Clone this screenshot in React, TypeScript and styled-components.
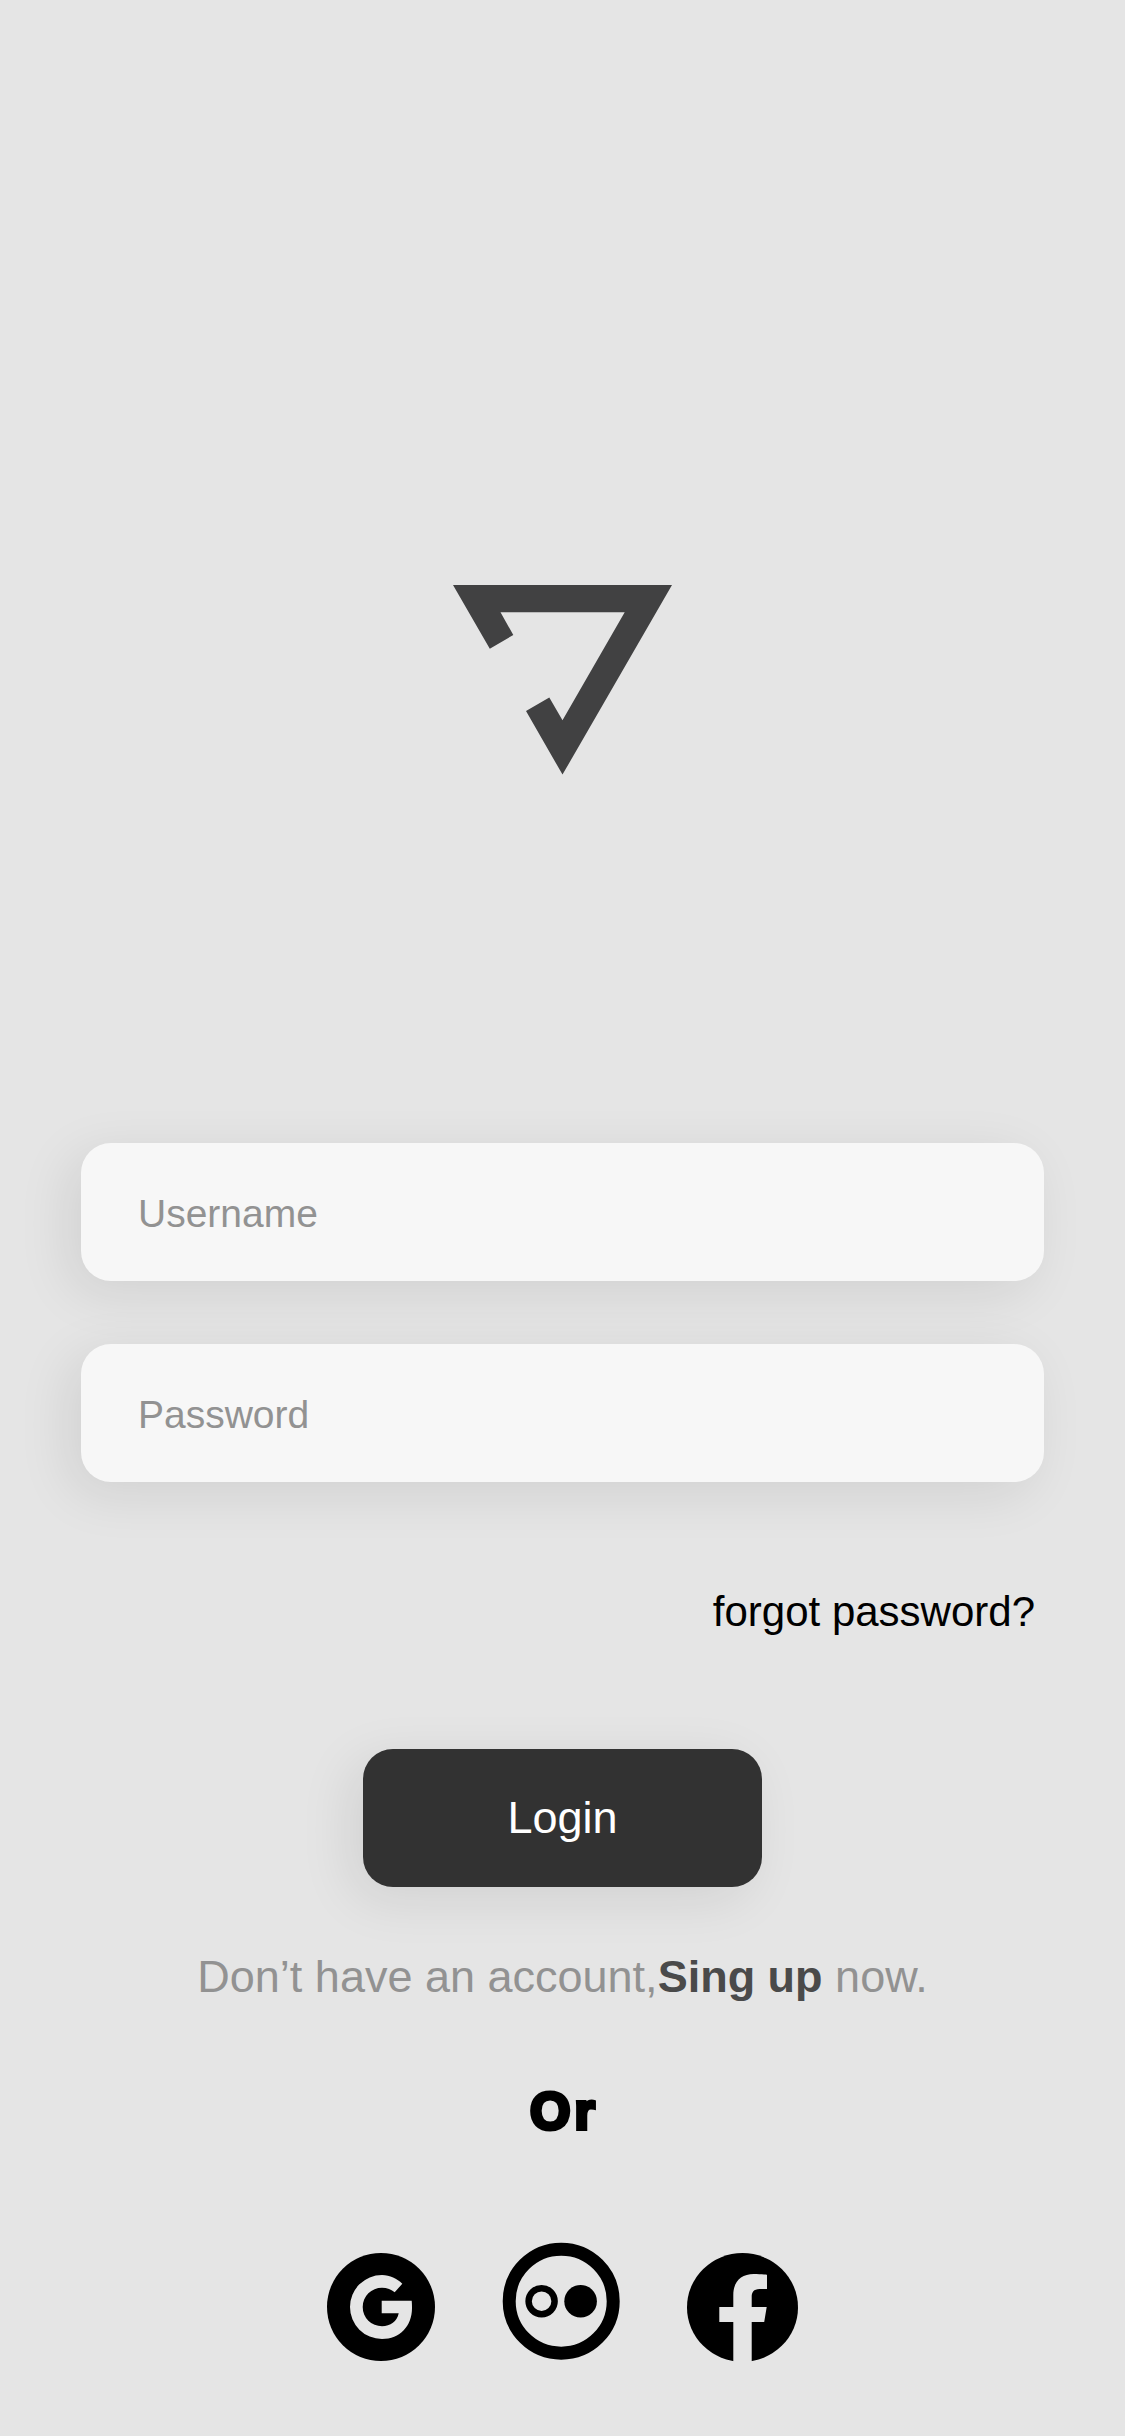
import React from "react";
import styled, { createGlobalStyle } from "styled-components";

const GlobalStyle = createGlobalStyle`
  *, *::before, *::after { box-sizing: border-box; }
  body {
    margin: 0;
    background: #e5e5e5;
    font-family: "Liberation Sans", Arial, Helvetica, sans-serif;
  }
`;

const Screen = styled.main`
  display: flex;
  flex-direction: column;
  align-items: center;
  width: 1125px;
  height: 2436px;
  padding: 585px 81px 0;
  overflow: hidden;
  background: #e5e5e5;
`;

const Logo = styled.svg`
  display: block;
  flex: none;
  width: 219px;
  height: 190px;
`;

const Form = styled.form`
  display: flex;
  flex-direction: column;
  align-items: center;
  width: 963px;
  margin-top: 368px;
`;

const Fields = styled.div`
  display: flex;
  flex-direction: column;
  gap: 63px;
  width: 100%;
`;

const Field = styled.input`
  width: 100%;
  height: 138px;
  padding: 4px 57px 0;
  border: 0;
  border-radius: 30px;
  outline: none;
  background: #f7f7f7;
  box-shadow: -12px 12px 54px rgba(0, 0, 0, 0.09);
  color: #323232;
  font: 39px "Liberation Sans", Arial, sans-serif;

  &::placeholder {
    color: #929292;
    opacity: 1;
  }
`;

const ForgotLink = styled.a`
  align-self: flex-end;
  margin: 106px 9px 0 0;
  color: #000;
  font-size: 42px;
  line-height: 48px;
  text-decoration: none;
`;

const LoginButton = styled.button`
  width: 399px;
  height: 138px;
  margin-top: 113px;
  padding: 0;
  border: 0;
  border-radius: 30px;
  background: #323232;
  box-shadow: -12px 12px 54px rgba(0, 0, 0, 0.09);
  color: #fff;
  font: 45px "Liberation Sans", Arial, sans-serif;
`;

const SignUp = styled.p`
  margin: 64px 0 0;
  color: #929292;
  font-size: 45px;
  line-height: 52px;
  white-space: nowrap;

  strong {
    color: #4a4a4a;
    font-weight: 700;
  }
`;

const Divider = styled.div`
  margin-top: 75px;
  padding-left: 4px;
  color: #000;
  font: 700 52px/66px "Liberation Sans", Arial, sans-serif;
  letter-spacing: 4.2px;
  -webkit-text-stroke: 4px #000;
`;

const Socials = styled.nav`
  display: flex;
  align-items: flex-start;
  justify-content: center;
  margin-top: 98px;
`;

const SocialLink = styled.a<{ $size: number; $drop?: number; $gap?: number }>`
  display: block;
  width: ${(p) => p.$size}px;
  margin-top: ${(p) => p.$drop ?? 0}px;
  margin-left: ${(p) => p.$gap ?? 0}px;

  svg {
    display: block;
    width: 100%;
  }
`;

const GoogleIcon = () => (
  <svg viewBox="0 0 108 108">
    <circle cx="54" cy="54" r="54" />
    <path
      fill="#e5e5e5"
      d="M75.3 30.7C70 25.5 63 22 55 22A32 32 0 1 0 55 86C73 86 85 73 85 55C85 52 84.9 50 84.7 47.7H54.7V60.3H71.7C70 68.5 63.5 73.3 55 73.3A19.3 19.3 0 1 1 55 34.7C60 34.7 64.5 36.5 67.7 39.3Z"
    />
  </svg>
);

const FlickrIcon = () => (
  <svg viewBox="0 0 118 118" fill="none" stroke="#000">
    <circle cx="59.2" cy="59.2" r="52" strokeWidth="13" />
    <circle cx="39.6" cy="59.2" r="13" strokeWidth="6.5" />
    <circle cx="78.6" cy="59.2" r="16.3" fill="#000" stroke="none" />
  </svg>
);

const FacebookIcon = () => (
  <svg viewBox="0 0 111 109">
    <ellipse cx="55.5" cy="54.4" rx="55.5" ry="54.4" />
    <path
      fill="#e5e5e5"
      d="M46.3 111V69H32.3V54H46.3V42C46.3 28.5 54.3 21 66.8 21C72.8 21 80 21.8 80 21.8V36H72.5C66.5 36 64.7 39.7 64.7 43.5V54H79.7L77.2 69H64.7V111Z"
    />
  </svg>
);

export default function App() {
  return (
    <>
      <GlobalStyle />
      <Screen>
        <Logo viewBox="0 0 219 190">
          <path
            fill="#414142"
            d="M0 0H219L109.5 189.6L73 126L96.3 112.5L109.5 135.3L171.7 27.3H47.5L60.3 50L36.8 63.7Z"
          />
        </Logo>
        <Form onSubmit={(e) => e.preventDefault()}>
          <Fields>
            <Field type="text" placeholder="Username" />
            <Field type="password" placeholder="Password" />
          </Fields>
          <ForgotLink>forgot password?</ForgotLink>
          <LoginButton type="submit">Login</LoginButton>
        </Form>
        <SignUp>
          Don’t have an account,<strong>Sing up</strong> now.
        </SignUp>
        <Divider>Or</Divider>
        <Socials>
          <SocialLink $size={108} $drop={11} aria-label="Google">
            <GoogleIcon />
          </SocialLink>
          <SocialLink $size={118} $gap={67} aria-label="Flickr">
            <FlickrIcon />
          </SocialLink>
          <SocialLink $size={111} $drop={11} $gap={67} aria-label="Facebook">
            <FacebookIcon />
          </SocialLink>
        </Socials>
      </Screen>
    </>
  );
}
